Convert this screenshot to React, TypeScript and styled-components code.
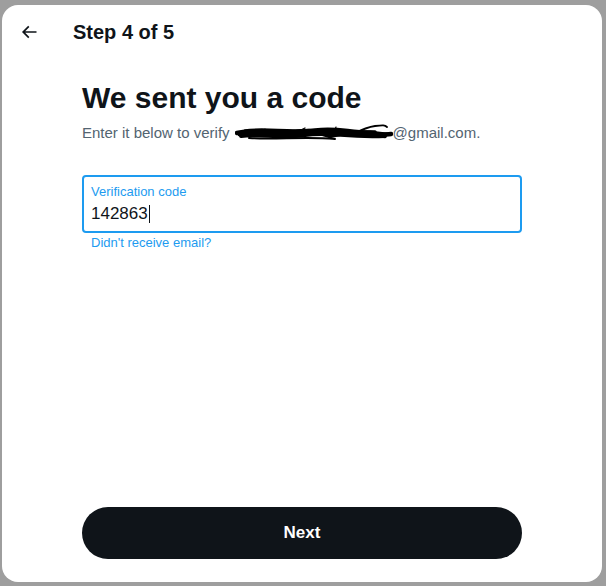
import styled, { createGlobalStyle } from "styled-components";

const GlobalStyle = createGlobalStyle`
  html, body {
    margin: 0;
    padding: 0;
    background: #9e9e9e;
  }
  * {
    box-sizing: border-box;
  }
`;

const Backdrop = styled.div`
  width: 606px;
  height: 586px;
  padding: 5px 4px 4px 2px;
  background: #9e9e9e;
  font-family: "Liberation Sans", Arial, sans-serif;
`;

const Panel = styled.div`
  height: 100%;
  background: #ffffff;
  border-radius: 16px;
  display: flex;
  flex-direction: column;
`;

const Header = styled.div`
  height: 53px;
  display: flex;
  align-items: center;
  padding-left: 17px;
`;

const BackButton = styled.button`
  width: 20px;
  height: 20px;
  padding: 0;
  border: none;
  background: none;
  display: flex;
  color: #0f1419;
  cursor: pointer;
`;

const StepTitle = styled.h2`
  margin: 0 0 0 34px;
  font-size: 20px;
  font-weight: 700;
  color: #0f1419;
  line-height: 24px;
`;

const Body = styled.div`
  flex: 1;
  padding: 22px 80px 0 80px;
`;

const Heading = styled.h1`
  margin: 0;
  font-size: 30px;
  line-height: 36px;
  font-weight: 700;
  color: #0f1419;
`;

const Subtitle = styled.div`
  margin-top: 6px;
  font-size: 15px;
  line-height: 20px;
  color: #536471;
  white-space: nowrap;
`;

const Scribble = styled.svg`
  vertical-align: -4px;
  margin-left: 5px;
`;

const Field = styled.div`
  margin-top: 32px;
  height: 58px;
  border: 2px solid #1d9bf0;
  border-radius: 4px;
  padding: 7px 7px 0 7px;
`;

const FieldLabel = styled.div`
  font-size: 13px;
  line-height: 16px;
  color: #1d9bf0;
`;

const FieldValue = styled.div`
  margin-top: 2px;
  font-size: 17px;
  line-height: 24px;
  color: #0f1419;
  display: flex;
  align-items: center;
`;

const Caret = styled.span`
  display: inline-block;
  width: 1px;
  height: 18px;
  margin-left: 1px;
  background: #0f1419;
`;

const HelpLink = styled.a`
  display: inline-block;
  margin: 2px 0 0 9px;
  font-size: 13px;
  line-height: 16px;
  color: #1d9bf0;
  text-decoration: none;
  cursor: pointer;
`;

const Footer = styled.div`
  padding: 0 80px 23px 80px;
`;

const NextButton = styled.button`
  width: 100%;
  height: 52px;
  border: none;
  border-radius: 26px;
  background: #0f1419;
  color: #ffffff;
  font-family: "Liberation Sans", Arial, sans-serif;
  font-size: 17px;
  font-weight: 700;
  cursor: pointer;
`;

const App = () => {
  return (
    <>
      <GlobalStyle />
      <Backdrop>
        <Panel>
          <Header>
            <BackButton aria-label="Back">
              <svg viewBox="0 0 24 24" width="20" height="20" fill="currentColor">
                <path d="M7.414 13l5.043 5.04-1.414 1.42L3.586 12l7.457-7.46 1.414 1.42L7.414 11H21v2H7.414z" />
              </svg>
            </BackButton>
            <StepTitle>Step 4 of 5</StepTitle>
          </Header>
          <Body>
            <Heading>We sent you a code</Heading>
            <Subtitle>
              Enter it below to verify
              <Scribble width="158" height="20" viewBox="0 0 158 20">
                <g fill="none" stroke="#000" strokeLinecap="round" strokeLinejoin="round">
                  <path d="M2 11 C20 7 40 14 60 10 S100 13 120 11 S145 14 156 12" strokeWidth="4.5" />
                  <path d="M6 14 C25 11 45 17 70 13 S110 16 150 14" strokeWidth="4" />
                  <path d="M10 9 C30 6 55 11 80 8 S115 11 140 10" strokeWidth="3.5" />
                  <path d="M20 12 C45 9 70 15 95 11 S130 15 152 12" strokeWidth="3.5" />
                  <path d="M4 13 L30 8 L50 15 L75 9 L95 15 L118 10 L150 15" strokeWidth="2.5" />
                  <path d="M118 12 C126 8 132 5 140 4 S150 3 152 5" strokeWidth="1.8" />
                  <path d="M14 16 C40 18 70 14 100 17" strokeWidth="2" />
                  <path d="M66 8 L70 6" strokeWidth="1.2" />
                  <path d="M100 8 L101 5" strokeWidth="1.2" />
                </g>
              </Scribble>
              @gmail.com.
            </Subtitle>
            <Field>
              <FieldLabel>Verification code</FieldLabel>
              <FieldValue>
                142863
                <Caret />
              </FieldValue>
            </Field>
            <HelpLink>Didn't receive email?</HelpLink>
          </Body>
          <Footer>
            <NextButton>Next</NextButton>
          </Footer>
        </Panel>
      </Backdrop>
    </>
  );
};

export default App;
